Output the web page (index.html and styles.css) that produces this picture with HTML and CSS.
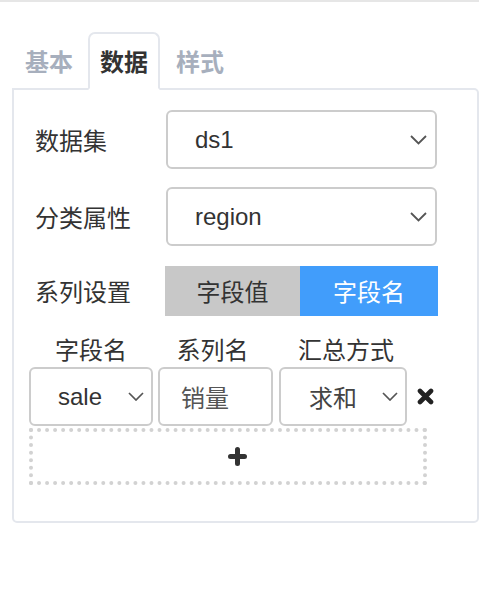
FILE: index.html
```html
<!DOCTYPE html>
<html lang="zh-CN">
<head>
<meta charset="utf-8">
<title>数据设置</title>
<link rel="stylesheet" href="styles.css">
</head>
<body>
<div class="topbar"></div>
<div class="wrap">
  <div class="tabs">
    <div class="tab tab-first">基本</div>
    <div class="tab tab-active">数据</div>
    <div class="tab">样式</div>
  </div>
  <div class="panel">
    <div class="row row-first">
      <div class="label">数据集</div>
      <div class="select select-wide">
        <span class="val">ds1</span>
        <svg class="chev" width="17" height="10" viewBox="0 0 17 10"><polyline points="1,1 8.5,8.5 16,1" fill="none" stroke="#555" stroke-width="1.8"/></svg>
      </div>
    </div>
    <div class="row row-second">
      <div class="label">分类属性</div>
      <div class="select select-wide">
        <span class="val">region</span>
        <svg class="chev" width="17" height="10" viewBox="0 0 17 10"><polyline points="1,1 8.5,8.5 16,1" fill="none" stroke="#555" stroke-width="1.8"/></svg>
      </div>
    </div>
    <div class="row row-third">
      <div class="label">系列设置</div>
      <div class="toggle">
        <div class="tbtn tbtn-off">字段值</div>
        <div class="tbtn tbtn-on">字段名</div>
      </div>
    </div>
    <div class="cols cols-head">
      <div class="c1 head">字段名</div>
      <div class="c2 head">系列名</div>
      <div class="c3 head">汇总方式</div>
    </div>
    <div class="cols cols-body">
      <div class="c1 select select-small">
        <span class="val">sale</span>
        <svg class="chev-s" width="16" height="9" viewBox="0 0 16 9"><polyline points="1,1 8,8 15,1" fill="none" stroke="#555" stroke-width="1.7"/></svg>
      </div>
      <div class="c2 input">销量</div>
      <div class="c3 select select-small">
        <span class="val">求和</span>
        <svg class="chev-s" width="16" height="9" viewBox="0 0 16 9"><polyline points="1,1 8,8 15,1" fill="none" stroke="#555" stroke-width="1.7"/></svg>
      </div>
      <svg class="del" width="17" height="17" viewBox="0 0 17 17"><path d="M3 3 L14 14 M14 3 L3 14" stroke="#222" stroke-width="4.6" stroke-linecap="round"/></svg>
    </div>
    <div class="addbox">
      <svg class="plus" width="19" height="19" viewBox="0 0 19 19"><path d="M9.5 2.5 V16.5 M2.5 9.5 H16.5" stroke="#333" stroke-width="5" stroke-linecap="round"/></svg>
    </div>
  </div>
</div>
</body>
</html>
```

FILE: styles.css
```css
* { box-sizing: border-box; }
html, body { margin: 0; padding: 0; background: #fff; }
body {
  font-family: "Liberation Sans", "Noto Sans CJK SC", sans-serif;
  font-size: 24px;
  color: #333;
  width: 482px;
  height: 592px;
  overflow: hidden;
}
.topbar { width: 479px; height: 2px; background: #e6e6e6; }
.wrap { padding-left: 12px; padding-top: 30px; }
.tabs { display: flex; height: 58px; margin-bottom: -2px; position: relative; z-index: 1; }
.tab {
  font-family: "Noto Sans CJK SC", sans-serif;
  font-weight: bold;
  font-size: 24px;
  line-height: 54px;
  color: #a7afbd;
  border: 2px solid transparent;
  padding: 0 14px;
}
.tab-first { padding: 0 13px 0 11px; }
.tab-active {
  color: #333;
  border-color: #e4e7ed;
  border-bottom-color: #fff;
  border-radius: 7px 7px 0 0;
  padding: 0 10px;
  background: #fff;
}
.panel {
  width: 467px;
  height: 435px;
  border: 2px solid #e4e7ed;
  border-radius: 0 5px 5px 5px;
}
.row { display: flex; align-items: center; margin-left: 21px; }
.row-first { margin-top: 20px; }
.row-second { margin-top: 18px; }
.row-third { margin-top: 20px; }
.label {
  width: 131px;
  font-family: "Noto Sans CJK SC", sans-serif;
  color: #333;
  line-height: 30px;
}
.select {
  display: flex;
  align-items: center;
  border: 2px solid #cccccc;
  border-radius: 6px;
  background: #fff;
  color: #333;
  height: 59px;
}
.select-wide { width: 271px; padding: 0 8px 0 27px; }
.select-wide .val { flex: 1; }
.row-third .label { margin-right: -1px; }
.toggle { display: flex; height: 50px; }
.tbtn {
  font-family: "Noto Sans CJK SC", sans-serif;
  line-height: 50px;
  text-align: center;
}
.tbtn-off { width: 135px; background: #c8c8c8; color: #333; }
.tbtn-on { width: 138px; background: #419dfb; color: #fff; }
.cols { display: flex; margin-left: 15px; }
.cols-head { margin-top: 15px; height: 36px; align-items: center; }
.head {
  font-family: "Noto Sans CJK SC", sans-serif;
  text-align: center;
  line-height: 36px;
}
.c1 { width: 124px; }
.c2 { width: 115px; margin-left: 5px; }
.c3 { width: 128px; margin-left: 6px; }
.cols-head .c2 { padding-right: 6px; }
.cols-head .c3 { padding-left: 6px; }
.cols-body { align-items: center; height: 59px; }
.select-small { padding: 0 7px 0 27px; }
.select-small .val { flex: 1; }
.c3.select-small { padding-left: 28px; }
.input {
  height: 59px;
  border: 2px solid #cccccc;
  border-radius: 6px;
  padding-left: 21px;
  line-height: 55px;
  font-family: "Noto Sans CJK SC", sans-serif;
  color: #555;
}
.select .val { line-height: 55px; }
.c3 .val { font-family: "Noto Sans CJK SC", sans-serif; color: #444; }
.del { margin-left: 10px; }
.addbox {
  margin-left: 15px;
  margin-top: 2px;
  width: 398px;
  height: 57px;
  border: 4px dotted #d2d2d2;
  display: flex;
  align-items: center;
  justify-content: center;
  padding-left: 19px;
}
.plus { display: block; }
```
